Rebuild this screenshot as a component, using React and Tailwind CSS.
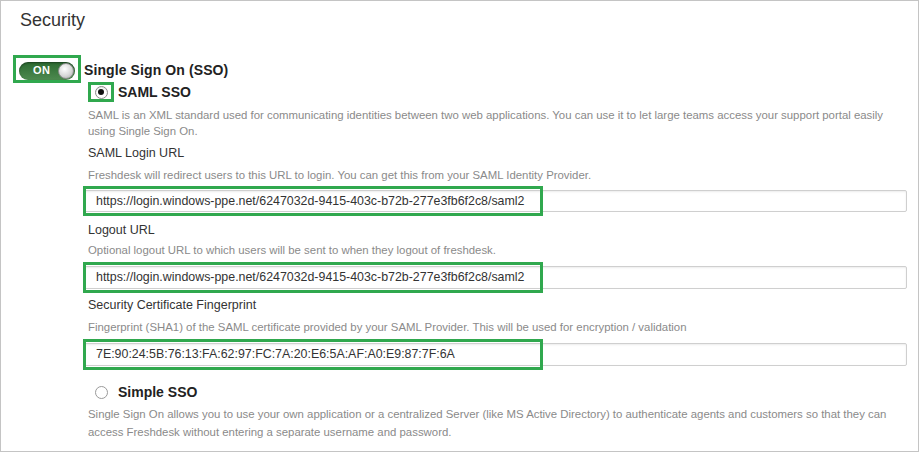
import React from 'react';

function GreenMark({ className }) {
  return <div className={`absolute border-[3px] border-[#30a84e] pointer-events-none ${className}`} />;
}

function Field({ value, height }) {
  return (
    <div className="relative">
      <div
        className={`${height} w-full border border-[#cfcfcf] rounded-[2px] bg-white shadow-[inset_0_1px_2px_rgba(0,0,0,0.08)] flex items-center pl-[11px] text-[12.4px] text-[#333]`}
      >
        {value}
      </div>
      <GreenMark className="-left-[1px] -top-[4px] w-[460px] h-[calc(100%+8px)]" />
    </div>
  );
}

function Radio({ checked }) {
  return (
    <span className="w-[13px] h-[13px] rounded-full border border-[#8a8a8a] bg-white flex items-center justify-center shadow-[inset_0_1px_1px_rgba(0,0,0,0.1)]">
      {checked && <span className="w-[6px] h-[6px] rounded-full bg-[#111]" />}
    </span>
  );
}

export default function App() {
  const url = 'https://login.windows-ppe.net/6247032d-9415-403c-b72b-277e3fb6f2c8/saml2';

  return (
    <div className="w-[919px] h-[452px] border border-[#c4c4c4] bg-white overflow-hidden font-['Liberation_Sans',Arial,sans-serif]">
      <h2 className="mt-[8px] pl-[19px] text-[18px] leading-[22px] text-[#333]">Security</h2>

      <div className="mt-[24px] flex items-start">
        {/* toggle */}
        <div className="ml-[12px] w-[68px] h-[28px] border-[3px] border-[#30a84e] flex items-center justify-center pt-[3px]">
          <div className="w-[56px] h-[18px] rounded-full bg-gradient-to-b from-[#2c6a31] to-[#4d8a4f] shadow-[inset_0_1px_2px_rgba(0,0,0,0.4)] flex items-center justify-between pl-[14px] pr-[1px]">
            <span className="text-white text-[11px] font-bold leading-none tracking-[0.5px]">ON</span>
            <span className="w-[16px] h-[16px] rounded-full bg-[radial-gradient(circle_at_40%_35%,#ffffff,#d8d8d8_55%,#a9a9a9)] border border-[#8f8f8f]" />
          </div>
        </div>

        <div className="ml-[3px] w-[823px] pt-[6px]">
          <div className="text-[14px] leading-[18px] font-bold text-[#222] tracking-[0.1px]">Single Sign On (SSO)</div>

          <div className="mt-[3px] pl-[4px] flex items-center">
            <div className="w-[26px] h-[20px] border-[3px] border-[#30a84e] flex items-center justify-center">
              <Radio checked />
            </div>
            <span className="ml-[4px] text-[14px] leading-[18px] font-bold text-[#222]">SAML SSO</span>
          </div>

          <p className="mt-[5px] pl-[4px] pr-[2px] text-[11.4px] leading-[16px] text-[#8a8a8a]">
            SAML is an XML standard used for communicating identities between two web applications. You can use it to let large teams access your support portal easily using Single Sign On.
          </p>

          <div className="mt-[6px] pl-[4px] text-[12.5px] leading-[16px] text-[#333]">SAML Login URL</div>
          <p className="mt-[6px] pl-[4px] text-[11.4px] leading-[16px] text-[#8a8a8a]">
            Freshdesk will redirect users to this URL to login. You can get this from your SAML Identity Provider.
          </p>
          <div className="mt-[7px]">
            <Field value={url} height="h-[22px]" />
          </div>

          <div className="mt-[10px] pl-[4px] text-[12.5px] leading-[16px] text-[#333]">Logout URL</div>
          <p className="mt-[4px] pl-[4px] text-[11.4px] leading-[16px] text-[#8a8a8a]">
            Optional logout URL to which users will be sent to when they logout of freshdesk.
          </p>
          <div className="mt-[8px]">
            <Field value={url} height="h-[23px]" />
          </div>

          <div className="mt-[8px] pl-[4px] text-[12.5px] leading-[16px] text-[#333]">Security Certificate Fingerprint</div>
          <p className="mt-[6px] pl-[4px] text-[11.4px] leading-[16px] text-[#8a8a8a]">
            Fingerprint (SHA1) of the SAML certificate provided by your SAML Provider. This will be used for encryption / validation
          </p>
          <div className="mt-[8px]">
            <Field value="7E:90:24:5B:76:13:FA:62:97:FC:7A:20:E6:5A:AF:A0:E9:87:7F:6A" height="h-[23px]" />
          </div>

          <div className="mt-[17px] pl-[11px] flex items-center">
            <span className="w-[13px] h-[13px] rounded-full border border-[#9a9a9a] bg-white" />
            <span className="ml-[10px] text-[14px] leading-[18px] font-bold text-[#222]">Simple SSO</span>
          </div>
          <p className="mt-[4px] pl-[4px] pr-[12px] text-[11.4px] leading-[18px] text-[#8a8a8a]">
            Single Sign On allows you to use your own application or a centralized Server (like MS Active Directory) to authenticate agents and customers so that they can access Freshdesk without entering a separate username and password.
          </p>
        </div>
      </div>
    </div>
  );
}
